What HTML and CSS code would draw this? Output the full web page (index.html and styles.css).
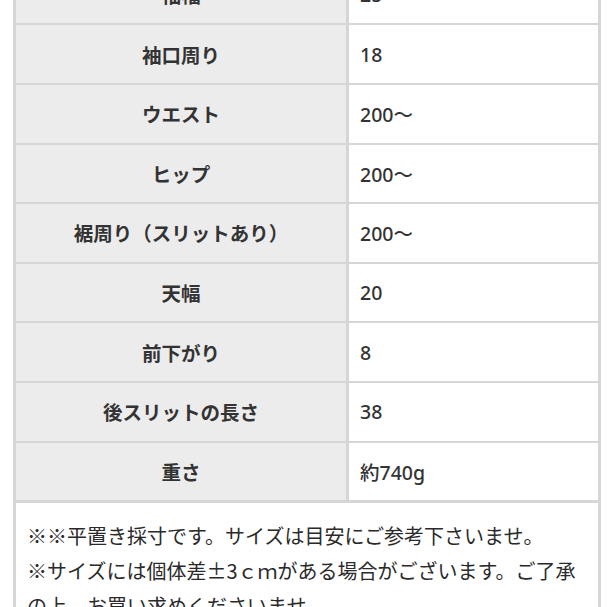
FILE: index.html
```html
<!DOCTYPE html>
<html lang="ja">
<head>
<meta charset="utf-8">
<link rel="stylesheet" href="styles.css">
</head>
<body>
<div class="sheet">
  <div class="row"><div class="label">袖幅</div><div class="value">25</div></div>
  <div class="row"><div class="label">袖口周り</div><div class="value">18</div></div>
  <div class="row"><div class="label">ウエスト</div><div class="value">200〜</div></div>
  <div class="row"><div class="label">ヒップ</div><div class="value">200〜</div></div>
  <div class="row"><div class="label">裾周り（スリットあり）</div><div class="value">200〜</div></div>
  <div class="row"><div class="label">天幅</div><div class="value">20</div></div>
  <div class="row"><div class="label">前下がり</div><div class="value">8</div></div>
  <div class="row"><div class="label">後スリットの長さ</div><div class="value">38</div></div>
  <div class="row"><div class="label">重さ</div><div class="value">約740g</div></div>
  <div class="note">
    <p>※※平置き採寸です。サイズは目安にご参考下さいませ。</p>
    <p>※サイズには個体差±3ｃｍがある場合がございます。ご了承の上、お買い求めくださいませ。</p>
  </div>
</div>
</body>
</html>
```

FILE: styles.css
```css
html, body {
  margin: 0;
  padding: 0;
  background: #ffffff;
}
body {
  font-family: "Noto Sans CJK JP", "Noto Sans", sans-serif;
  color: #333333;
  overflow: hidden;
}
.sheet {
  margin-left: 13px;
  margin-top: -34.2px;
  width: 588px;
  box-sizing: border-box;
  border-left: 3px solid #d6d6d6;
  border-right: 3px solid #d6d6d6;
}
.row {
  display: grid;
  grid-template-columns: 333px 1fr;
  height: 59.6px;
  box-sizing: border-box;
  border-bottom: 2px solid #d6d6d6;
}
.label {
  background: #ececec;
  border-right: 3px solid #d6d6d6;
  display: flex;
  align-items: center;
  justify-content: center;
  font-weight: bold;
  font-size: 19.5px;
  color: #333333;
}
.value {
  display: flex;
  align-items: center;
  padding-left: 11px;
  font-family: "Noto Sans", "Noto Sans CJK JP", sans-serif;
  font-size: 19.5px;
  font-weight: 500;
  color: #333333;
}
.note {
  border-top: 1px solid #d6d6d6;
  padding: 15px 10px 0 11px;
  font-size: 20px;
  line-height: 35px;
  color: #2a2a2a;
}
.note p {
  margin: 0;
}
```
